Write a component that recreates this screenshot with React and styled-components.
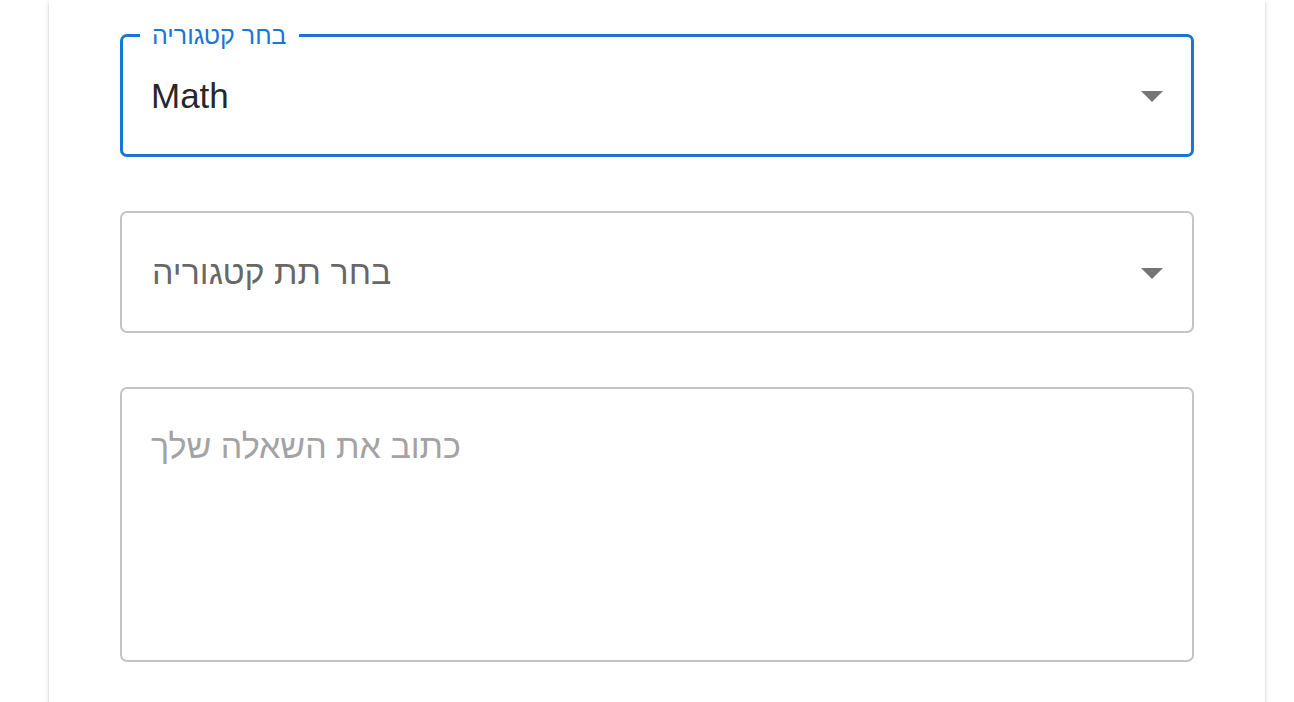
import React from "react";
import styled, { createGlobalStyle } from "styled-components";

const GlobalStyle = createGlobalStyle`
  html, body {
    margin: 0;
    padding: 0;
    background: #ffffff;
    overflow: hidden;
  }
  body {
    font-family: "Liberation Sans", Arial, "DejaVu Sans", sans-serif;
  }
`;

const Page = styled.div`
  width: 1294px;
  height: 702px;
  display: flex;
  justify-content: flex-start;
  padding-left: 49px;
  box-sizing: border-box;
`;

const Card = styled.div`
  width: 1216px;
  min-height: 760px;
  background: #fff;
  box-sizing: border-box;
  padding: 34px 71px 0 71px;
  display: flex;
  flex-direction: column;
  gap: 54px;
  box-shadow: 0 4px 2px -2px rgba(0, 0, 0, 0.2), 0 2px 2px 0 rgba(0, 0, 0, 0.14),
    0 2px 6px 0 rgba(0, 0, 0, 0.12);
`;

const FieldBox = styled.div`
  position: relative;
  box-sizing: border-box;
  height: ${(p) => p.$height}px;
  border: ${(p) => (p.$focused ? "3px solid #1976d2" : "2px solid #c4c4c4")};
  border-radius: 7px;
  display: flex;
  align-items: ${(p) => (p.$multiline ? "flex-start" : "center")};
  padding: ${(p) =>
    p.$focused ? "0 28px 0 28px" : p.$multiline ? "0" : "0 29px 0 30px"};
  font-size: 34px;
`;

const FloatLabel = styled.span`
  position: absolute;
  top: -16px;
  left: 17px;
  padding: 0 12px;
  background: #fff;
  color: #1976d2;
  font-size: 25px;
  line-height: 28px;
  white-space: nowrap;
`;

const Value = styled.span`
  flex: 1;
  font-size: ${(p) => (p.$placeholder ? "34px" : "35px")};
  color: ${(p) => (p.$placeholder ? "rgba(0,0,0,0.62)" : "rgba(0,0,0,0.87)")};
  line-height: 40px;
  white-space: nowrap;
`;

const Arrow = styled.svg`
  width: 22px;
  height: 11px;
  flex: none;
  margin-top: 2px;
  fill: #757575;
`;

const TextArea = styled.textarea`
  width: 100%;
  height: 100%;
  box-sizing: border-box;
  border: none;
  outline: none;
  resize: none;
  background: transparent;
  padding: 37px 30px 20px 29px;
  font-family: "Liberation Sans", Arial, "DejaVu Sans", sans-serif;
  font-size: 34px;
  line-height: 40px;
  color: rgba(0, 0, 0, 0.87);
  &::placeholder {
    color: #a3a3a3;
    opacity: 1;
  }
`;

const DropArrow = () => (
  <Arrow viewBox="0 0 22 11">
    <polygon points="0,0 22,0 11,11" />
  </Arrow>
);

export default function App() {
  return (
    <>
      <GlobalStyle />
      <Page>
        <Card>
          <FieldBox $height={123} $focused>
            <FloatLabel>בחר קטגוריה</FloatLabel>
            <Value>Math</Value>
            <DropArrow />
          </FieldBox>
          <FieldBox $height={122}>
            <Value $placeholder>בחר תת קטגוריה</Value>
            <DropArrow />
          </FieldBox>
          <FieldBox $height={275} $multiline>
            <TextArea placeholder="כתוב את השאלה שלך" />
          </FieldBox>
        </Card>
      </Page>
    </>
  );
}
